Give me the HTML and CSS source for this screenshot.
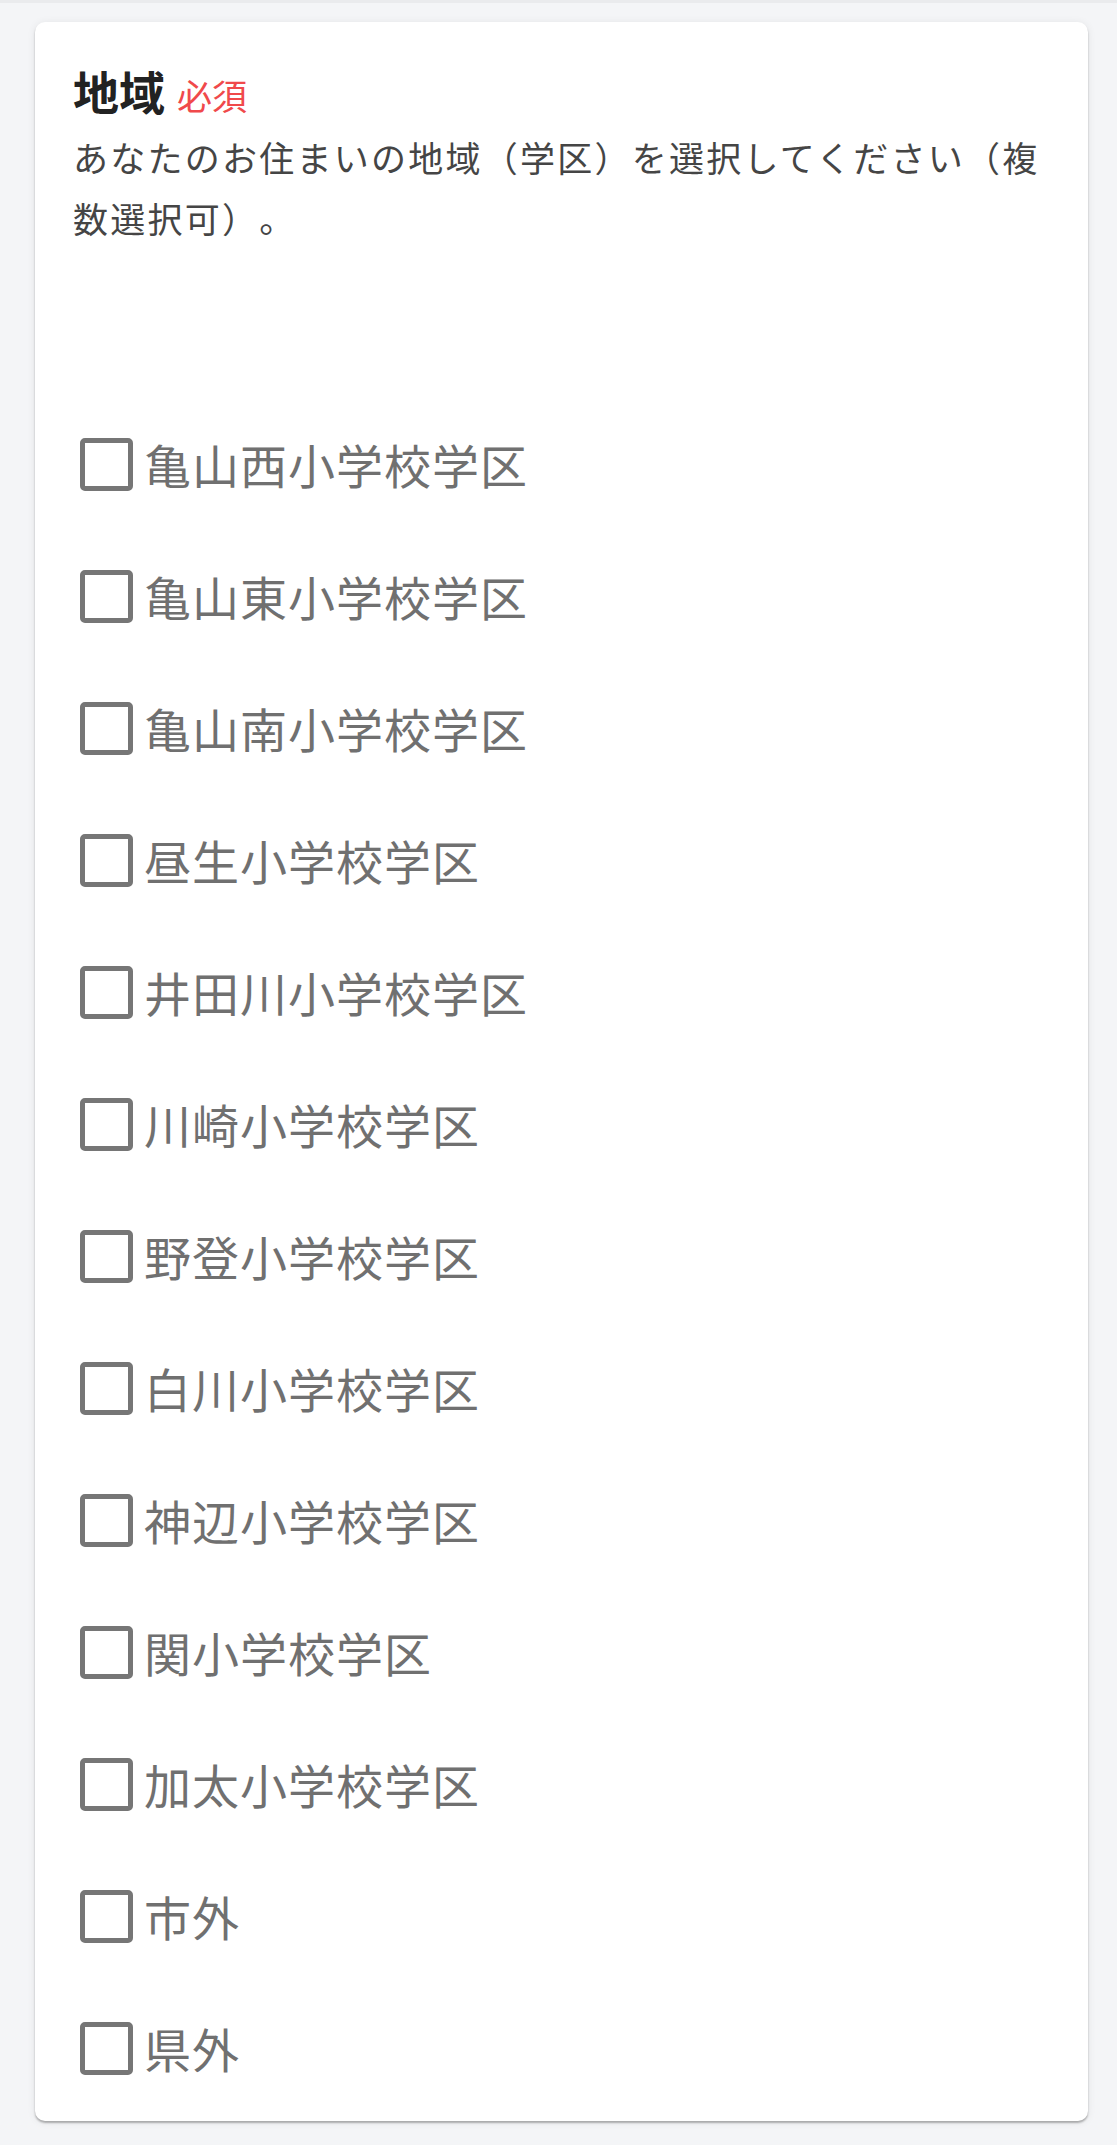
FILE: index.html
```html
<!DOCTYPE html>
<html lang="ja">
  <head>
    <meta charset="UTF-8" />
    <meta name="viewport" content="width=device-width, initial-scale=1" />
    <title>地域</title>
    <link rel="stylesheet" href="styles.css">
  </head>
  <body>
    <main>
      <section class="card">
        <h2 class="question">地域<span class="required">必須</span></h2>
        <p class="help">あなたのお住まいの地域（学区）を選択してください（複数選択可）。</p>

        <div class="options">
          <label class="option"><input type="checkbox" name="area" value="1" /><span>亀山西小学校学区</span></label>
          <label class="option"><input type="checkbox" name="area" value="2" /><span>亀山東小学校学区</span></label>
          <label class="option"><input type="checkbox" name="area" value="3" /><span>亀山南小学校学区</span></label>
          <label class="option"><input type="checkbox" name="area" value="4" /><span>昼生小学校学区</span></label>
          <label class="option"><input type="checkbox" name="area" value="5" /><span>井田川小学校学区</span></label>
          <label class="option"><input type="checkbox" name="area" value="6" /><span>川崎小学校学区</span></label>
          <label class="option"><input type="checkbox" name="area" value="7" /><span>野登小学校学区</span></label>
          <label class="option"><input type="checkbox" name="area" value="8" /><span>白川小学校学区</span></label>
          <label class="option"><input type="checkbox" name="area" value="9" /><span>神辺小学校学区</span></label>
          <label class="option"><input type="checkbox" name="area" value="10" /><span>関小学校学区</span></label>
          <label class="option"><input type="checkbox" name="area" value="11" /><span>加太小学校学区</span></label>
          <label class="option"><input type="checkbox" name="area" value="12" /><span>市外</span></label>
          <label class="option"><input type="checkbox" name="area" value="13" /><span>県外</span></label>
        </div>
      </section>
    </main>
  </body>
</html>
```

FILE: styles.css
```css
body {
  font-family: "Noto Sans CJK JP", "Noto Sans", sans-serif;
  background-color: #f4f5f7; /* page grey */
  border-top: 3px solid #eaebed;
  margin: 0;
  text-spacing-trim: space-all; /* keep full-width brackets wide */
}

main {
  padding: 19px 29px 24px 35px;
}

.card {
  background-color: #fff;
  border-radius: 10px;
  padding: 36px 38px 46px;
  box-shadow: 0 2px 2px rgba(0, 0, 0, 0.28), 0 1px 8px rgba(0, 0, 0, 0.08);
}

.question {
  margin: 0;
  font-size: 46px;
  font-weight: 700;
  line-height: 1.4;
  color: #222;
}

.required {
  margin-left: 12px;
  font-size: 35px;
  font-weight: 400;
  color: #f0494b;
}

.help {
  margin: 4px 0 0;
  font-size: 35px;
  letter-spacing: 2.25px;
  line-height: 61px;
  color: #454545;
}

.options {
  display: flex;
  flex-direction: column;
  gap: 79px;
  margin-top: 190px;
}

.option {
  display: flex;
  align-items: center;
  gap: 11px;
  height: 53px;
  font-size: 47px;
  letter-spacing: 1px;
  color: #707070;
  cursor: pointer;
}

.option span {
  margin-top: -3px;
}

.option input[type="checkbox"] {
  appearance: none;
  -webkit-appearance: none;
  width: 53px;
  height: 53px;
  margin: 0 0 0 7px;
  border: 5px solid #767676;
  border-radius: 5px;
  background-color: #fff;
  flex-shrink: 0;
  cursor: pointer;
}

.option input[type="checkbox"]:checked {
  background-color: #767676;
}
```
